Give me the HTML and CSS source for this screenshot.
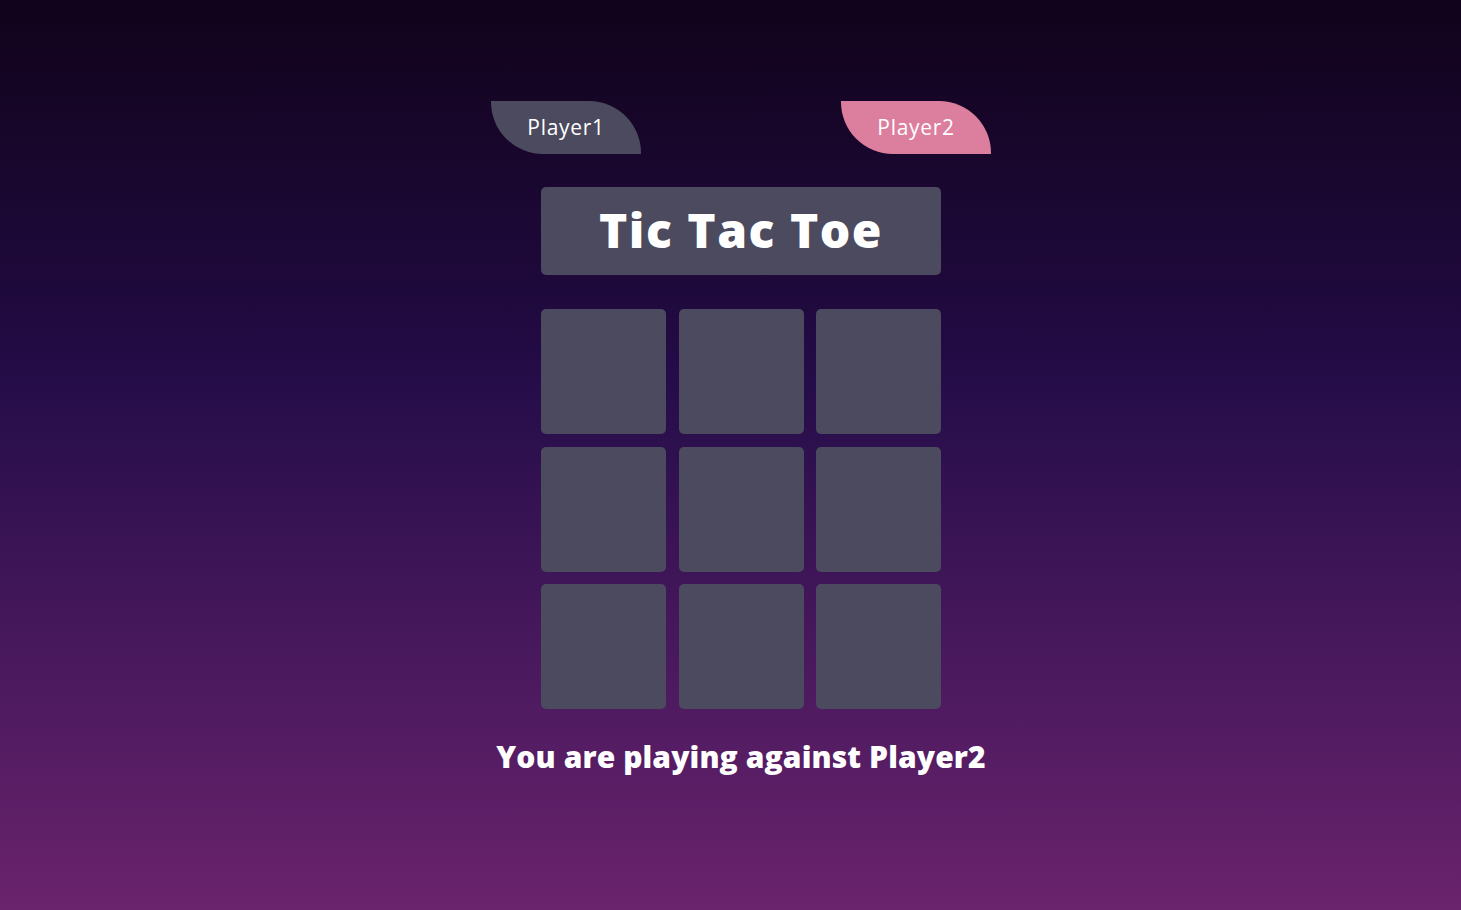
FILE: index.html
```html
<!DOCTYPE html>
<html lang="en">
<head>
<meta charset="utf-8">
<title>Tic Tac Toe</title>
<link rel="stylesheet" href="styles.css">
</head>
<body>
<main class="game">
  <div class="players">
    <div class="badge badge-one">Player1</div>
    <div class="badge badge-two">Player2</div>
  </div>
  <h1 class="title">Tic Tac Toe</h1>
  <div class="board">
    <div class="cell"></div><div class="cell"></div><div class="cell"></div>
    <div class="cell"></div><div class="cell"></div><div class="cell"></div>
    <div class="cell"></div><div class="cell"></div><div class="cell"></div>
  </div>
  <p class="status">You are playing against Player2</p>
</main>
</body>
</html>
```
FILE: styles.css
```css
* { box-sizing: border-box; }
html, body { margin: 0; height: 100%; }
body {
  min-height: 910px;
  background: linear-gradient(180deg, #11031b 0%, #200a3f 35%, #250d49 42%, #3d1557 62%, #6a236d 100%);
  font-family: "Open Sans", "DejaVu Sans", sans-serif;
  color: #ffffff;
}
.game {
  display: flex;
  flex-direction: column;
  align-items: center;
  padding-top: 101px;
  padding-left: 21px;
}
.players {
  width: 500px;
  display: flex;
  justify-content: space-between;
}
.badge {
  width: 150px;
  height: 53px;
  display: flex;
  align-items: center;
  justify-content: center;
  border-radius: 0 52px 0 52px;
  font-size: 21px;
  font-weight: 400;
  letter-spacing: 0.7px;
  padding-bottom: 1px;
}
.badge-one { background: #4b4a5e; }
.badge-two { background: #dc7e9d; }
.title {
  margin: 33px 0 0;
  width: 400px;
  height: 88px;
  background: #4b4a5e;
  border-radius: 5px;
  display: flex;
  align-items: center;
  justify-content: center;
  font-size: 48px;
  font-weight: 800;
  letter-spacing: 1.5px;
  padding-bottom: 3px;
}
.board {
  margin-top: 34px;
  width: 400px;
  display: grid;
  grid-template-columns: repeat(3, 125px);
  grid-template-rows: repeat(3, 125px);
  gap: 12.5px;
}
.cell {
  background: #4b4a5e;
  border-radius: 5px;
}
.status {
  margin: 27px 0 0;
  font-size: 30px;
  font-weight: 800;
  letter-spacing: 0.1px;
}
```
